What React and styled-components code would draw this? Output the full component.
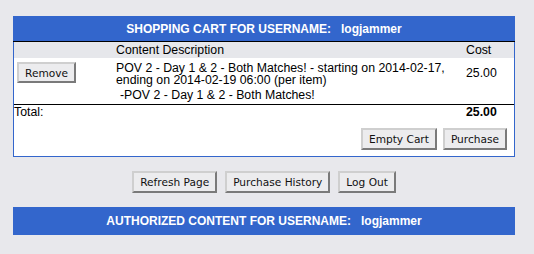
import React from 'react';
import styled, { createGlobalStyle } from 'styled-components';

const GlobalStyle = createGlobalStyle`
  html, body {
    margin: 0;
    padding: 0;
    background: #e8e8ec;
  }
  body {
    font-family: "Liberation Sans", Arial, sans-serif;
    font-size: 12.3px;
    color: #000;
  }
`;

const Page = styled.div`
  padding: 16px 19px 0 13px;
  display: flex;
  flex-direction: column;
`;

const Panel = styled.div`
  border: 1px solid #3366cc;
  border-top: none;
  background: #fff;
`;

const TitleBar = styled.div`
  background: #3366cc;
  color: #fff;
  font-weight: bold;
  font-size: 12px;
  height: ${p => p.$height || 25}px;
  display: flex;
  align-items: center;
  justify-content: center;
  border-bottom: ${p => (p.$rule ? '1px solid #000' : 'none')};
  white-space: pre;
`;

const Table = styled.table`
  width: 100%;
  border-collapse: collapse;
  border-spacing: 0;
`;

const HeadRow = styled.tr`
  background: #e6e7eb;
`;

const Cell = styled.td`
  padding: ${p => p.$pad || '0'};
  height: ${p => (p.$h ? `${p.$h}px` : 'auto')};
  vertical-align: ${p => p.$valign || 'middle'};
  text-align: left;
  font-weight: ${p => (p.$bold ? 'bold' : 'normal')};
  line-height: ${p => p.$lh || 15}px;
  width: ${p => p.$width || 'auto'};
  border-top: ${p => (p.$rule ? '1px solid #000' : 'none')};
  box-sizing: border-box;
`;

const Button = styled.button`
  display: block;
  font-family: "DejaVu Sans", sans-serif;
  font-size: 10.6px;
  color: #111;
  background: #ececee;
  border: 2px solid;
  border-color: #cfcfcf #7a7a7a #7a7a7a #cfcfcf;
  height: ${p => p.$h || 22}px;
  padding: 0 ${p => p.$px || 6}px;
  margin: 0;
  cursor: pointer;
`;

const ButtonRow = styled.div`
  display: flex;
  justify-content: ${p => p.$justify || 'center'};
  gap: ${p => p.$gap || 8}px;
  padding: ${p => p.$pad || '0'};
`;

export default function App() {
  return (
    <>
      <GlobalStyle />
      <Page>
        <TitleBar $rule>SHOPPING CART FOR USERNAME:   logjammer</TitleBar>
        <Panel>
          <Table>
            <tbody>
              <HeadRow>
                <Cell $width="102px" $h={16} />
                <Cell>Content Description</Cell>
                <Cell $width="48px">Cost</Cell>
              </HeadRow>
              <tr>
                <Cell $pad="4px 0 0 3px" $valign="top" $h={30}>
                  <Button $h={21}>Remove</Button>
                </Cell>
                <Cell $lh={12} $pad="4px 14px 2px 0">
                  POV 2 - Day 1 &amp; 2 - Both Matches! - starting on 2014-02-17, ending on 2014-02-19 06:00 (per item)
                </Cell>
                <Cell>25.00</Cell>
              </tr>
              <tr>
                <Cell $h={16} />
                <Cell $pad="0 0 0 4px">-POV 2 - Day 1 &amp; 2 - Both Matches!</Cell>
                <Cell />
              </tr>
              <tr>
                <Cell $rule $h={17}>Total:</Cell>
                <Cell $rule />
                <Cell $rule $bold>25.00</Cell>
              </tr>
            </tbody>
          </Table>
          <ButtonRow $justify="flex-end" $gap={6} $pad="7px 7px 6px 0">
            <Button>Empty Cart</Button>
            <Button>Purchase</Button>
          </ButtonRow>
        </Panel>
        <ButtonRow $pad="14px 0 14px 0">
          <Button>Refresh Page</Button>
          <Button>Purchase History</Button>
          <Button>Log Out</Button>
        </ButtonRow>
        <TitleBar $height={28}>AUTHORIZED CONTENT FOR USERNAME:   logjammer</TitleBar>
      </Page>
    </>
  );
}
